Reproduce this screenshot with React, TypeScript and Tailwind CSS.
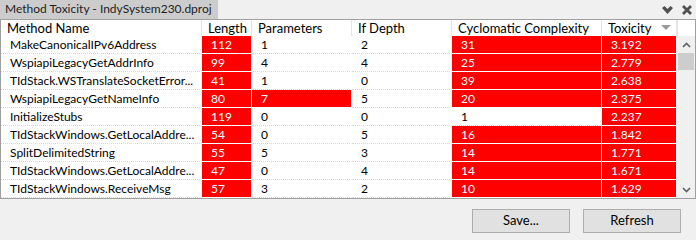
const rows = [
  { name: "MakeCanonicalIPv6Address", len: 112, params: 1, depth: 2, cc: 31, tox: "3.192" },
  { name: "WspiapiLegacyGetAddrInfo", len: 99, params: 4, depth: 4, cc: 25, tox: "2.779" },
  { name: "TIdStack.WSTranslateSocketError...", len: 41, params: 1, depth: 0, cc: 39, tox: "2.638" },
  { name: "WspiapiLegacyGetNameInfo", len: 80, params: 7, depth: 5, cc: 20, tox: "2.375" },
  { name: "InitializeStubs", len: 119, params: 0, depth: 0, cc: 1, tox: "2.237" },
  { name: "TIdStackWindows.GetLocalAddre...", len: 54, params: 0, depth: 5, cc: 16, tox: "1.842" },
  { name: "SplitDelimitedString", len: 55, params: 5, depth: 3, cc: 14, tox: "1.771" },
  { name: "TIdStackWindows.GetLocalAddre...", len: 47, params: 0, depth: 4, cc: 14, tox: "1.671" },
  { name: "TIdStackWindows.ReceiveMsg", len: 57, params: 3, depth: 2, cc: 10, tox: "1.629" },
];

function Cell({ value, hot }: { value: string | number; hot: boolean }) {
  return (
    <div
      className={`h-[18px] pl-[9px] leading-[17px] whitespace-nowrap overflow-hidden border-r border-b ${
        hot
          ? "bg-[#ff0000] text-white border-white border-solid"
          : "bg-white text-black border-r-white border-b-[#d9d9d9] border-dotted"
      }`}
    >
      {value}
    </div>
  );
}

function Head({ label, sort }: { label: string; sort?: boolean }) {
  return (
    <div className="h-[16px] pl-[6px] text-[13px] leading-[15px] border-r border-[#e5e5e5] flex items-center justify-between pr-[5px] whitespace-nowrap">
      <span>{label}</span>
      {sort && (
        <svg width="10" height="6" viewBox="0 0 10 6">
          <path d="M0 0 L10 0 L5 5 Z" fill="#9a9a9a" />
        </svg>
      )}
    </div>
  );
}

export default function App() {
  return (
    <div
      className="w-[696px] h-[240px] bg-[#f0f0f0] text-[12px] text-black flex flex-col overflow-hidden"
      style={{ fontFamily: '"Segoe UI", Lato, "Liberation Sans", sans-serif' }}
    >
      <div className="h-[19px] flex items-stretch justify-between">
        <div className="bg-[#cccccc] pl-[5px] pr-[6px] leading-[18px] text-[#1e1e1e] text-[12px] whitespace-nowrap">
          Method Toxicity - IndySystem230.dproj
        </div>
        <div className="flex items-center gap-[9px] pr-[4px] pt-[1px]">
          <svg width="11" height="9" viewBox="0 0 11 9">
            <path d="M0 2 L2.5 0 L5.5 3 L8.5 0 L11 2 L5.5 8 Z" fill="#505050" />
          </svg>
          <svg width="10" height="10" viewBox="0 0 10 10">
            <path d="M1 1 L9 9 M9 1 L1 9" stroke="#505050" strokeWidth="2.8" />
          </svg>
        </div>
      </div>

      <div className="h-[180px] bg-white border border-[#a0a0a0] flex">
        <div className="grid grid-cols-[201px_50px_100px_100px_150px_75px] content-start">
          <Head label="Method Name" />
          <Head label="Length" />
          <Head label="Parameters" />
          <Head label="If Depth" />
          <Head label="Cyclomatic Complexity" />
          <Head label="Toxicity" sort />
          {rows.map((r, i) => (
            <div key={i} className="contents">
              <Cell value={r.name} hot={false} />
              <Cell value={r.len} hot />
              <Cell value={r.params} hot={r.params > 5} />
              <Cell value={r.depth} hot={false} />
              <Cell value={r.cc} hot={r.cc > 5} />
              <Cell value={r.tox} hot />
            </div>
          ))}
        </div>
        <div className="w-[18px] flex flex-col">
          <div className="h-[16px] bg-white border-l border-[#e5e5e5]" />
          <div className="flex-1 bg-[#f0f0f0] flex flex-col">
            <div className="h-[17px] flex items-center justify-center">
              <svg width="9" height="6" viewBox="0 0 9 6">
                <path d="M1 5 L4.5 1.5 L8 5" stroke="#606060" strokeWidth="1.6" fill="none" />
              </svg>
            </div>
            <div className="h-[17px] mx-[1px] bg-[#cdcdcd]" />
            <div className="flex-1" />
            <div className="h-[17px] flex items-center justify-center">
              <svg width="9" height="6" viewBox="0 0 9 6">
                <path d="M1 1 L4.5 4.5 L8 1" stroke="#606060" strokeWidth="1.6" fill="none" />
              </svg>
            </div>
          </div>
        </div>
      </div>

      <div className="flex justify-end gap-[13px] pt-[10px] pr-[15px]">
        <button className="w-[98px] h-[24px] bg-[#e1e1e1] border border-[#adadad] text-black text-[13px]">
          Save...
        </button>
        <button className="w-[98px] h-[24px] bg-[#e1e1e1] border border-[#adadad] text-black text-[13px]">
          Refresh
        </button>
      </div>
    </div>
  );
}
